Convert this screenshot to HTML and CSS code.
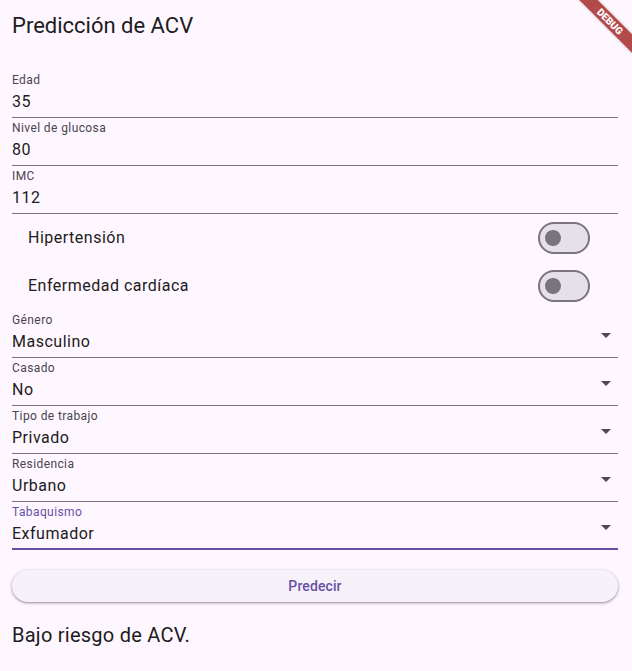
FILE: index.html
```html
<!DOCTYPE html>
<html lang="es">
<head>
<meta charset="utf-8">
<title>Predicción de ACV</title>
<link rel="stylesheet" href="styles.css">
</head>
<body>
<div class="page">
  <div class="banner">DEBUG</div>
  <h1 class="title">Predicción de ACV</h1>
  <div class="form">
    <div class="field"><div class="label">Edad</div><div class="value">35</div></div>
    <div class="field"><div class="label">Nivel de glucosa</div><div class="value">80</div></div>
    <div class="field"><div class="label">IMC</div><div class="value">112</div></div>

    <div class="switch-row"><span class="switch-label">Hipertensión</span><span class="switch"><span class="thumb"></span></span></div>
    <div class="switch-row"><span class="switch-label">Enfermedad cardíaca</span><span class="switch"><span class="thumb"></span></span></div>

    <div class="field"><div class="label">Género</div><div class="dd-row"><span class="value">Masculino</span><svg class="arrow" viewBox="0 0 24 24" width="24" height="24"><path d="M7 10l5 5 5-5z"/></svg></div></div>
    <div class="field"><div class="label">Casado</div><div class="dd-row"><span class="value">No</span><svg class="arrow" viewBox="0 0 24 24" width="24" height="24"><path d="M7 10l5 5 5-5z"/></svg></div></div>
    <div class="field"><div class="label">Tipo de trabajo</div><div class="dd-row"><span class="value">Privado</span><svg class="arrow" viewBox="0 0 24 24" width="24" height="24"><path d="M7 10l5 5 5-5z"/></svg></div></div>
    <div class="field"><div class="label">Residencia</div><div class="dd-row"><span class="value">Urbano</span><svg class="arrow" viewBox="0 0 24 24" width="24" height="24"><path d="M7 10l5 5 5-5z"/></svg></div></div>
    <div class="field focused"><div class="label">Tabaquismo</div><div class="dd-row"><span class="value">Exfumador</span><svg class="arrow" viewBox="0 0 24 24" width="24" height="24"><path d="M7 10l5 5 5-5z"/></svg></div></div>
  </div>
  <button class="btn">Predecir</button>
  <p class="result">Bajo riesgo de ACV.</p>
</div>
</body>
</html>
```
FILE: styles.css
```css
html, body {
  margin: 0;
  padding: 0;
  overflow: hidden;
  background: #fef7ff;
}

.page {
  position: relative;
  min-height: 671px;
  box-sizing: border-box;
  padding: 12px 14px 0 12px;
  font-family: Roboto, "Noto Sans", sans-serif;
  color: #1d1b20;
}

.banner {
  position: absolute;
  left: 560px;
  top: 15px;
  width: 100px;
  height: 13px;
  line-height: 13px;
  background: #b34a4a;
  color: #fff;
  font-size: 10px;
  font-weight: 900;
  text-align: center;
  transform: rotate(45deg);
  box-shadow: 0 0 3px rgba(0, 0, 0, 0.25);
}

.title {
  margin: 0 0 30px;
  font-size: 22px;
  font-weight: 400;
  line-height: 28px;
}

.field {
  height: 48px;
  box-sizing: border-box;
  padding-top: 2px;
  border-bottom: 1px solid #79747e;
}

.field.focused {
  border-bottom: 2px solid #6750a4;
}

.field.focused .label {
  color: #6750a4;
}

.label {
  font-size: 12px;
  line-height: 16px;
  letter-spacing: 0.4px;
  color: #49454f;
  margin-bottom: 2px;
}

.value {
  font-size: 16px;
  line-height: 24px;
  letter-spacing: 0.5px;
}

.dd-row {
  display: flex;
  justify-content: space-between;
  align-items: flex-start;
}

.arrow {
  margin-top: -7px;
  fill: #4d4b52;
}

.switch-row {
  height: 48px;
  display: flex;
  align-items: center;
  justify-content: space-between;
  padding: 0 28px 0 16px;
}

.switch-label {
  font-size: 16px;
  letter-spacing: 0.5px;
  line-height: 24px;
}

.switch {
  width: 52px;
  height: 32px;
  box-sizing: border-box;
  border: 2px solid #79747e;
  border-radius: 16px;
  background: #e6e0e9;
  display: flex;
  align-items: center;
  padding-left: 5px;
}

.thumb {
  width: 16px;
  height: 16px;
  border-radius: 50%;
  background: #79747e;
}

.btn {
  display: block;
  width: 100%;
  height: 32px;
  margin-top: 20px;
  border: none;
  border-radius: 16px;
  background: #f7f2fa;
  color: #6750a4;
  font-family: Roboto, "Noto Sans", sans-serif;
  font-size: 14px;
  font-weight: 500;
  letter-spacing: 0.1px;
  box-shadow: 0 1px 2px rgba(0, 0, 0, 0.3), 0 1px 3px 1px rgba(0, 0, 0, 0.12);
}

.result {
  margin: 19px 0 0;
  font-size: 20px;
  line-height: 28px;
  letter-spacing: 0.25px;
}
```
